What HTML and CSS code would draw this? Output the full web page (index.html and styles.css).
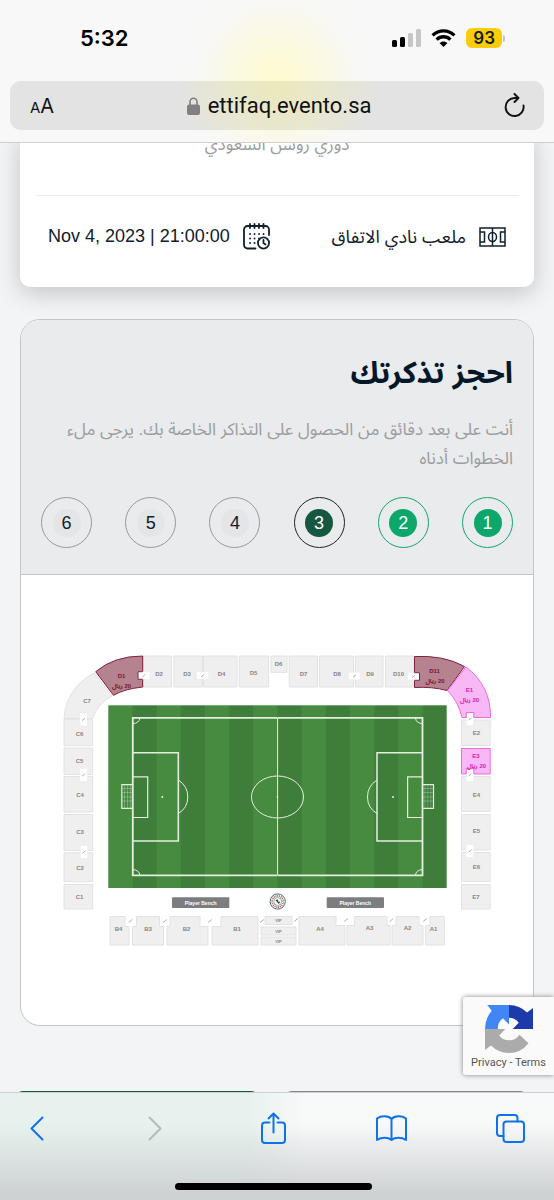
FILE: index.html
```html
<!DOCTYPE html>
<html lang="ar">
<head>
<meta charset="utf-8">
<meta name="viewport" content="width=device-width, initial-scale=1">
<title>ettifaq.evento.sa</title>
<link rel="stylesheet" href="styles.css">
</head>
<body>
<div class="screen">
  <header class="browser-top">
    <div class="status">
      <span class="clock">5:32</span>
      <div class="indicators">
        <svg width="29" height="18" viewBox="0 0 29 18" aria-hidden="true">
          <rect x="0" y="11" width="5" height="7" rx="1.5"/><rect x="8" y="8" width="5" height="10" rx="1.5"/>
          <rect x="16" y="4" width="5" height="14" rx="1.5" fill="#c6c6c8"/><rect x="24" y="0" width="5" height="18" rx="1.5" fill="#c6c6c8"/>
        </svg>
        <svg width="25" height="18" viewBox="0 0 25 18" aria-hidden="true">
          <path d="M1.6 6.4C8 .4 17 .4 23.400 6.400M5.600 10.600c4-3.800 9.800-3.800 13.800 0" fill="none" stroke="#000" stroke-width="3.300"/>
          <path d="M12.500 18l-4-4c2.400-2.100 5.600-2.100 8 0z"/>
        </svg>
        <div class="battery"><span class="charge">93</span><span class="cap"></span></div>
      </div>
    </div>
    <div class="address">
      <button class="plain text-size" type="button" aria-label="Text size"><small>A</small>A</button>
      <div class="site">
        <svg width="13" height="18" viewBox="0 0 13 18" aria-hidden="true"><rect y="7.500" width="13" height="10.500" rx="2" fill="#808084"/><path d="M3 8V5a3.500 3.800 0 0 1 7 0v3" fill="none" stroke="#808084" stroke-width="1.600"/></svg>
        <span>ettifaq.evento.sa</span>
      </div>
      <button class="plain" type="button" aria-label="Reload">
        <svg width="22" height="26" viewBox="0 0 22 26" fill="none" stroke="#111" stroke-width="1.900" stroke-linecap="round" stroke-linejoin="round"><path d="M19.500 12.500a9 9 0 1 1-9-7.500h3.500M10.500 1l4 4-4 4"/></svg>
      </button>
    </div>
  </header>

  <main class="page" dir="rtl">
    <section class="event">
      <p class="league">دوري روشن السعودي</p>
      <div class="facts">
        <div class="fact">
          <svg width="27" height="20" viewBox="0 0 27 20" fill="none" stroke="#10202b" stroke-width="1.500" aria-hidden="true"><path d="M1 1h25v18H1zM13.500 1v18M1 5h4.500v10H1M26 5h-4.500v10H26"/><ellipse cx="13.500" cy="10" rx="4" ry="4.500"/></svg>
          <span>ملعب نادي الاتفاق</span>
        </div>
        <div class="fact">
          <svg width="27" height="27" viewBox="0 0 27 27" fill="none" stroke="#10202b" stroke-width="1.800" stroke-linecap="round" aria-hidden="true"><path d="M12.500 25.500H4.500a3.500 3.500 0 0 1-3.500-3.500V6.500A3.500 3.500 0 0 1 4.500 3h18A3.500 3.500 0 0 1 26 6.500V12M7 1v4M11.500 1v4M16 1v4M20.500 1v4"/><path d="M7 11h.1M11.500 11h.1M16 11h.1M20.500 11h.1M7 15.500h.1M11.500 15.500h.1M7 20h.1M11.500 20h.1M16 15.500h.1"/><circle cx="20.500" cy="20" r="5.600"/><path d="M20.500 17v3l2 1.500"/></svg>
          <time dir="ltr" datetime="2023-11-04T21:00">Nov 4, 2023 | 21:00:00</time>
        </div>
      </div>
    </section>

    <section class="booking">
      <div class="booking-head">
        <h1>احجز تذكرتك</h1>
        <p class="intro">أنت على بعد دقائق من الحصول على التذاكر الخاصة بك. يرجى ملء الخطوات أدناه</p>
        <ol class="steps">
          <li class="step done"><span>1</span></li>
          <li class="step done"><span>2</span></li>
          <li class="step current" aria-current="step"><span>3</span></li>
          <li class="step"><span>4</span></li>
          <li class="step"><span>5</span></li>
          <li class="step"><span>6</span></li>
        </ol>
      </div>
      <svg class="map" viewBox="21 575 512 450" role="img" aria-label="Stadium map">
        <defs>
          <pattern id="mow" x="108.300" y="0" width="48.340" height="200" patternUnits="userSpaceOnUse"><rect width="48.340" height="200" fill="#478b41"/><rect x="24.170" width="24.170" height="200" fill="#3f7d3a"/></pattern>
          <g id="gate-h"><rect x="-6" y="-3.800" width="12" height="7.600" class="gate"/><path d="M-1.500 1.200L1.500-1.200" class="stair"/></g>
          <g id="gate-v"><rect x="-3.800" y="-6.500" width="7.600" height="13" class="gate"/><path d="M-1.500 1.200L1.500-1.200" class="stair"/></g>
          <path id="stair" d="M-1.800 1.500L1.800-1.500" class="stair"/>
          <g id="half" class="lines">
            <path d="M277.500 717.800H132.800V875.300H277.500" stroke-width="1.800"/>
            <path d="M132.800 752.700H178.300V841H132.800" stroke-width="1.500"/>
            <path d="M132.800 776.800H147.700V817.500H132.800M132.800 784.700H121.800V808.300H132.800" stroke-width="1.200"/>
            <path d="M178.300 780Q187.800 786 187.800 797T178.300 813.500"/>
            <path d="M132.800 723.500a6.500 5.500 0 0 0 7-5.500M132.800 869.700a6.500 5.500 0 0 1 7 5.500"/>
            <path d="M124.500 785V808M127.500 785V808M130.300 785V808M122 788.500H132M122 792.500H132M122 797H132M122 801H132" stroke-width=".3"/>
            <circle cx="162.300" cy="797" r="1" fill="#e4efdf" stroke="none"/>
          </g>
        </defs>
        <g class="seats">
          <path d="M94 673Q66 688 64 718.500H92.700Q97 704 112 696z"/>
          <path d="M143 656h28.700v31H143zM174 656h28.300v31H174zM203.500 656H237v31h-33.500zM239.300 656h29.400v31h-29.400zM271 656h16v16.400h-16zM289.200 656h28.300v31h-28.300zM319.600 656h33.900v31h-33.900zM355.500 656h27.500v31h-27.500zM385.500 656H414v31h-28.500z"/>
          <path d="M64 719.700h28.700v26H64zM64 748h28.700v26.500H64zM64 776.500h28.700v35.500H64zM64 814.500h28.700v36H64zM64 852.700h28.700v29H64zM64 884.500h28.700V909H64z"/>
          <path d="M461.500 720h28.700v25.500h-28.700zM461.500 776.500h28.700v35h-28.700zM461.500 814.500h28.700v35.500h-28.700zM461.500 852.500h28.700v29h-28.700zM461.500 884.500h28.700V909h-28.700z"/>
          <path d="M110 916.500h15v10h4V945H110zM136.500 916.500h23v10h4V945h-31V926.500h4zM170 916.500h30v10h8V945h-41V926.500h3zM221 916.500h37V945h-46V926.500h9zM265 916.500h27v8h-27zM261 927h35v8h-35zM261 937h35v8h-35z"/>
          <path d="M299 916.500h37v9h9V945h-46zM354.500 916.500H387v9h3V945h-43V925.500h7.500zM396 916.500h23v9h4V945h-31V925.500h4zM430 916.500h14.300V945h-18.600V925.500h4.300z"/>
        </g>
        <g class="sold-a"><path d="M95.700 671.700Q114 656 142.700 656V687Q124 689 113.500 695.300z"/><path d="M414.500 656.500Q444 655 464.500 666.500L447 690.500Q432 686.500 414.500 687.500z"/></g>
        <g class="sold-b"><path d="M466 667Q491 686 490.500 717.500H462Q458 701 447.500 690.500z"/><path d="M461.500 748.500h28.700v25.500h-28.700z"/></g>
        <rect x="108.300" y="705.300" width="338.400" height="182.700" fill="url(#mow)"/>
        <use href="#half"/><use href="#half" transform="matrix(-1 0 0 1 555.300 0)"/>
        <g class="lines"><path d="M277.600 718V875"/><ellipse cx="277.500" cy="797" rx="26" ry="21"/><circle cx="277.500" cy="797" r=".6"/></g>
        <use href="#gate-h" x="144" y="675.500"/><use href="#gate-h" x="202.700" y="675.500"/><use href="#gate-h" x="354.500" y="676"/><use href="#gate-h" x="413.500" y="676.500"/>
        <path class="notch-a" d="M142.700 671.700h-4.700v7.600h4.700M414.500 672.700h5v7.600h-5"/>
        <use href="#gate-v" x="83.500" y="719.500"/><use href="#gate-v" x="83.500" y="775"/><use href="#gate-v" x="84" y="852"/>
        <use href="#gate-v" x="470" y="719"/><use href="#gate-v" x="470" y="775"/><use href="#gate-v" x="470" y="851"/>
        <path class="notch-b" d="M466.200 717.500v-5h7.600v5M466.200 774v-5.500h7.600v5.500"/>
        <use href="#stair" x="130.500" y="921"/><use href="#stair" x="165" y="921"/><use href="#stair" x="210" y="921"/><use href="#stair" x="262" y="921"/><use href="#stair" x="296" y="920"/><use href="#stair" x="346" y="920"/><use href="#stair" x="391.500" y="920"/><use href="#stair" x="425" y="920"/>
        <g class="names">
          <text x="87" y="703">C7</text><text x="79.500" y="736">C6</text><text x="79.500" y="763">C5</text><text x="80" y="797">C4</text><text x="80" y="834">C3</text><text x="80" y="870">C2</text><text x="79.500" y="899">C1</text>
          <text x="159" y="676">D2</text><text x="187" y="676">D3</text><text x="221.500" y="676">D4</text><text x="253.500" y="675">D5</text><text x="278.500" y="666">D6</text><text x="303.500" y="676">D7</text><text x="337" y="676">D8</text><text x="370" y="676">D9</text><text x="398.500" y="676">D10</text>
          <text x="476.500" y="735">E2</text><text x="476.500" y="797">E4</text><text x="476.500" y="833">E5</text><text x="476.500" y="869">E6</text><text x="476" y="899">E7</text>
          <text x="118.500" y="931">B4</text><text x="148" y="931">B3</text><text x="186.500" y="931">B2</text><text x="237" y="931">B1</text><text x="320" y="931">A4</text><text x="369.500" y="930">A3</text><text x="407.500" y="930">A2</text><text x="433.500" y="931">A1</text>
        </g>
        <g class="names vip"><text x="278.500" y="922">VIP</text><text x="278.500" y="932.500">VIP</text><text x="278.500" y="942.500">VIP</text></g>
        <g class="names name-a"><text x="121.500" y="678">D1</text><text x="121.500" y="688" direction="rtl">20 ريال</text><text x="434.500" y="673">D11</text><text x="435" y="682.500" direction="rtl">20 ريال</text></g>
        <g class="names name-b"><text x="469.500" y="692">E1</text><text x="469.500" y="702" direction="rtl">20 ريال</text><text x="476" y="758">E3</text><text x="476.500" y="767.500" direction="rtl">20 ريال</text></g>
        <g fill="#7b7d80"><rect x="172" y="897.300" width="57.300" height="10.700" rx="1"/><rect x="326.700" y="897.300" width="57.300" height="10.700" rx="1"/></g>
        <g class="names bench"><text x="200.700" y="904.500">Player Bench</text><text x="355.300" y="904.500">Player Bench</text></g>
        <g fill="none"><circle cx="277.700" cy="901.500" r="7.600" fill="#fff" stroke="#47685c" stroke-width="1"/><circle cx="277.700" cy="901.500" r="5.600" stroke="#a65c5c" stroke-width="1.600" stroke-dasharray="1 .8"/><circle cx="277.700" cy="901.500" r="4" stroke="#47685c" stroke-width=".6"/><path d="M275.500 900.500l2-1.500 .7 2.500 2 .5-1.500 2-1.500-2z" fill="#174c3b"/></g>
      </svg>
    </section>

    <div class="actions">
      <button class="action next" type="button" aria-label="التالي"></button>
      <button class="action back" type="button" aria-label="السابق"></button>
    </div>

    <aside class="captcha" dir="ltr">
      <svg width="48" height="48" viewBox="0 0 64 64" aria-hidden="true">
        <path d="M3 0H32V26L24 17.500Q17 22 17 32H0Q0 18 9 7.500Z" fill="#4285f4"/>
        <path d="M32 0Q46 0 56 10L64 4V32H37L45 23.500Q40 17 32 17Z" fill="#1c3aa9"/>
        <path d="M0 32H27L19 40.500Q24 47 32 47Q41 47 46 39.500L58 51Q48 64 32 64Q18 64 8 54L0 60Z" fill="#ababab"/>
      </svg>
      <div class="legal"><a href="#privacy">Privacy</a> - <a href="#terms">Terms</a></div>
    </aside>
  </main>

  <footer class="browser-bottom">
    <nav class="tools" aria-label="Browser">
      <button class="plain" type="button" aria-label="Back"><svg width="14" height="25" viewBox="0 0 14 25"><path d="M12.500 1.500L1.500 12.500l11 11"/></svg></button>
      <button class="plain off" type="button" aria-label="Forward" disabled><svg width="14" height="25" viewBox="0 0 14 25"><path d="M1.500 1.500l11 11-11 11"/></svg></button>
      <button class="plain" type="button" aria-label="Share"><svg width="25" height="32" viewBox="0 0 25 32"><path d="M8.500 10.500H4a3 3 0 0 0-3 3V28a3 3 0 0 0 3 3h17a3 3 0 0 0 3-3V13.500a3 3 0 0 0-3-3h-4.500M12.500 20.500V1.500M7.500 6.500l5-5 5 5"/></svg></button>
      <button class="plain" type="button" aria-label="Bookmarks"><svg width="31" height="26" viewBox="0 0 31 26"><path d="M15.500 4C12.500.500 5 .500 1 3.500V25c4.500-3 11-3 14.500 0C19 22 25.500 22 30 25V3.500C26 .500 18.500.500 15.500 4v21"/></svg></button>
      <button class="plain" type="button" aria-label="Tabs"><svg width="29" height="29" viewBox="0 0 29 29"><path d="M7.500 22H4a3 3 0 0 1-3-3V4a3 3 0 0 1 3-3h14.500a3 3 0 0 1 3 3v3.500"/><rect x="7.500" y="7.500" width="20.500" height="20.500" rx="3"/></svg></button>
    </nav>
    <div class="home"></div>
  </footer>
</div>
</body>
</html>
```

FILE: styles.css
```css
* {
  box-sizing: border-box;
}

body {
  margin: 0;
  font-family: "Liberation Sans", "Noto Sans Arabic", "DejaVu Sans", sans-serif;
  color: #10202b;
}

p,
h1,
ol {
  margin: 0;
  padding: 0;
}

.screen {
  display: flex;
  flex-direction: column;
  height: 100vh;
  overflow: hidden;
}

.plain {
  display: flex;
  align-items: center;
  justify-content: center;
  padding: 0;
  border: 0;
  background: none;
  color: #111;
}

/* Browser bars */

.browser-top {
  flex: none;
  padding: 18px 10px 12px;
  border-bottom: 1px solid #cfcfd1;
  background: radial-gradient(circle at 50% 80px, #fffbd0 0, #fbf9e0 40px, #f8f8f6 80px, #f8f8f8 100px);
  font-family: Inter, "Liberation Sans", sans-serif;
}

.status {
  display: flex;
  justify-content: space-between;
  align-items: center;
  height: 40px;
  padding: 0 39px 0 70px;
}

.clock {
  font-size: 22px;
  font-weight: 600;
  color: #000;
}

.indicators {
  display: flex;
  align-items: center;
  gap: 10px;
}

.battery {
  display: flex;
  align-items: center;
  gap: 1px;
}

.charge {
  padding: 0 7px;
  border-radius: 6px;
  background: #fccc0a;
  font-size: 17px;
  line-height: 20px;
  font-weight: 600;
}

.cap {
  width: 2px;
  height: 7px;
  border-radius: 0 2px 2px 0;
  background: #c6c6c8;
}

.address {
  display: flex;
  justify-content: space-between;
  align-items: center;
  height: 49px;
  margin-top: 23px;
  padding: 0 18px 0 20px;
  border-radius: 11px;
  background: radial-gradient(circle at 50% 0, #ece9ba 0, #e8e7cf 50px, #e3e3e3 100px);
  color: #111;
}

.text-size {
  align-items: baseline;
  font: 20px Inter, "Liberation Sans", sans-serif;
}

.text-size small {
  font-size: 15px;
}

.site {
  display: flex;
  align-items: center;
  gap: 8px;
  font: 22px Roboto, sans-serif;
}

.browser-bottom {
  z-index: 1;
  flex: none;
  height: 108px;
  padding: 19px 28px 10px 21px;
  display: flex;
  flex-direction: column;
  justify-content: space-between;
  align-items: center;
  border-top: 1px solid #cdd1d1;
  background: linear-gradient(to bottom, transparent 30px, #cfd2d3 100px), linear-gradient(to right, #e7f2ee 45%, #f8f9f9 55%);
}

.tools {
  display: flex;
  justify-content: space-between;
  align-items: center;
  width: 100%;
  height: 32px;
}

.tools .plain {
  width: 32px;
}

.tools svg {
  fill: none;
  stroke: #0e73e8;
  stroke-width: 2;
  stroke-linecap: round;
  stroke-linejoin: round;
}

.tools .off svg {
  stroke: #b5bbbb;
}

.home {
  width: 39%;
  height: 7px;
  border-radius: 4px;
  background: #000;
}

/* Page */

.page {
  position: relative;
  flex: 1;
  min-height: 0;
  overflow: hidden;
  padding: 0 20px;
  background: #f3f4f6;
}

.event {
  margin-top: -10px;
  padding: 0 15px;
  border-radius: 0 0 10px 10px;
  background: #fff;
  box-shadow: 0 6px 24px rgba(0, 0, 0, 0.2);
}

.league {
  height: 63px;
  border-bottom: 1px solid #ededed;
  text-align: center;
  font-size: 17px;
  line-height: 24px;
  color: #9b9b9b;
}

.facts {
  display: flex;
  justify-content: space-between;
  align-items: center;
  height: 91px;
  padding: 0 13px 10px;
}

.fact {
  display: flex;
  align-items: center;
  gap: 13px;
  font-size: 18px;
}

.booking {
  margin-top: 32px;
  border: 1px solid #c3c5c8;
  border-radius: 20px;
  background: #fff;
  overflow: hidden;
}

.booking-head {
  padding: 32px 20px 26px;
  border-bottom: 1px solid #c3c5c8;
  background: #e9ebec;
}

h1 {
  font-size: 30px;
  line-height: 42px;
  color: #04182a;
}

.intro {
  margin-top: 21px;
  font-size: 17px;
  line-height: 29px;
  color: #9b9c9f;
}

.steps {
  display: flex;
  justify-content: space-between;
  margin-top: 24px;
  list-style: none;
}

.step {
  display: grid;
  place-items: center;
  width: 51px;
  height: 51px;
  border: 1px solid #97999b;
  border-radius: 50%;
  font-size: 18px;
}

.step span {
  width: 28px;
  height: 28px;
  border-radius: 50%;
  background: #e4e5e6;
  line-height: 28px;
  text-align: center;
}

.done {
  border-color: #12a66c;
}

.done span {
  background: #0da76b;
  color: #fff;
}

.current {
  border-color: #222;
}

.current span {
  background: #175641;
  color: #fff;
}

.actions {
  display: flex;
  flex-direction: row-reverse;
  gap: 25px;
  margin: 65px 6px 0 -5px;
}

.action {
  flex: 1;
  height: 50px;
  border: 0;
  border-radius: 8px;
}

.next {
  background: #175641;
}

.back {
  background: #85888b;
}

/* Stadium map */

.map {
  display: block;
  width: 100%;
}

.seats path {
  fill: #efefef;
  stroke: #e2e2e2;
  stroke-width: 1;
}

.sold-a path {
  fill: #b5828f;
  stroke: #841f40;
  stroke-width: 1;
}

.sold-b path {
  fill: #f8b8f5;
  stroke: #ef6ad6;
  stroke-width: 1;
}

.gate {
  fill: #fff;
  stroke: #e6e6e6;
  stroke-width: 0.4px;
}

.stair {
  fill: none;
  stroke: #888;
  stroke-width: 0.7px;
}

.notch-a {
  fill: none;
  stroke: #841f40;
}

.notch-b {
  fill: none;
  stroke: #ef6ad6;
}

.lines {
  fill: none;
  stroke: #e4efdf;
}

.names {
  fill: #858585;
  font-size: 6px;
  font-weight: 700;
  text-anchor: middle;
}

.vip {
  font-size: 4px;
}

.name-a {
  fill: #7a1337;
}

.name-b {
  fill: #d622ae;
}

.bench {
  fill: #fff;
  font-size: 5px;
}

/* Captcha badge */

.captcha {
  position: absolute;
  right: 0;
  bottom: 17px;
  width: 91px;
  padding: 8px 0 4px;
  border-radius: 3px 0 0 3px;
  background: #fafafa;
  box-shadow: 0 0 5px #808080;
  display: flex;
  flex-direction: column;
  align-items: center;
}

.legal {
  padding-top: 2px;
  font: 11px/16px Roboto, sans-serif;
  white-space: pre;
  color: #555;
}

.legal a {
  color: inherit;
  text-decoration: none;
}
```
